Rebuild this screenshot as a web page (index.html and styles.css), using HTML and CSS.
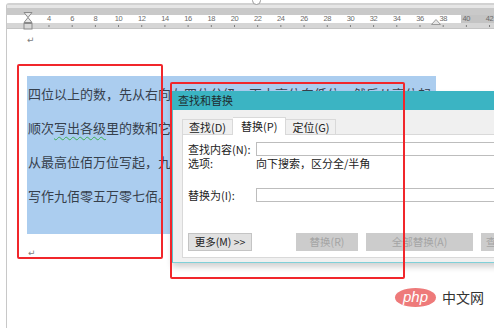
FILE: index.html
```html
<!DOCTYPE html>
<html lang="zh-CN">
<head>
    <meta charset="UTF-8">
    <meta name="viewport" content="width=device-width, initial-scale=1.0">
    <title>查找和替换</title>
    <link rel="stylesheet" href="styles.css">
</head>
<body>
    <div class="app">
        <div class="handle"></div>
        <div class="frame">
            <div class="strip"></div>
            <div class="ruler">
                <div class="ruler-dark"></div>
                <div class="ruler-scale">
                    <span class="ruler-lead"></span>
                    <span>4</span><span>6</span><span>8</span><span>10</span><span>12</span>
                    <span>14</span><span>16</span><span>18</span><span>20</span><span>22</span>
                    <span>24</span><span>26</span><span>28</span><span>30</span><span>32</span>
                    <span>34</span><span>36</span><span>38</span><span>40</span><span>42</span>
                </div>
                <div class="ruler-ticks"></div>
                <!-- indent markers -->
                <svg class="marker-left" width="10" height="18" viewBox="0 0 10 18">
                    <path d="M1 0.5 H9 L5 5.5 Z" fill="#e6e6e6" stroke="#8a8a8a"/>
                    <path d="M5 5.5 L9 10.5 H1 Z" fill="#e6e6e6" stroke="#8a8a8a"/>
                    <rect x="1" y="11.5" width="8" height="5.5" fill="#d8d8d8" stroke="#8a8a8a"/>
                </svg>
                <svg class="marker-right" width="10" height="6" viewBox="0 0 10 6">
                    <path d="M0.5 5.5 L5 0.5 L9.5 5.5 Z" fill="#e6e6e6" stroke="#9a9a9a"/>
                </svg>
            </div>
            <div class="doc">
                <div class="pmark">↵</div>
                <div class="selection">
                    <p>四位以上的数，先从右向左四位分级，再由高位向低位，然后从高位起</p>
                    <p>顺次<span class="wavy">写出各级</span>里的数和它们</p>
                    <p>从最高位佰万位写起，九佰</p>
                    <p>写作九佰零五万零七佰。</p>
                </div>
                <div class="pmark pmark-low">↵</div>
            </div>
        </div>

        <div class="dialog">
            <div class="dlg-title">查找和替换</div>
            <div class="dlg-body">
                <div class="tabs">
                    <div class="tab">查找(<u>D</u>)</div>
                    <div class="tab active">替换(<u>P</u>)</div>
                    <div class="tab">定位(<u>G</u>)</div>
                </div>
                <div class="panel">
                    <div class="row">
                        <label class="lbl">查找内容(<u>N</u>):</label>
                        <div class="field"></div>
                    </div>
                    <div class="row">
                        <span class="lbl">选项:</span>
                        <span>向下搜索，区分全/半角</span>
                    </div>
                    <div class="row row-replace">
                        <label class="lbl">替换为(<u>I</u>):</label>
                        <div class="field"></div>
                    </div>
                    <div class="buttons">
                        <button class="btn btn-more">更多(<u>M</u>) &gt;&gt;</button>
                        <button class="btn btn-off btn-one">替换(<u>R</u>)</button>
                        <button class="btn btn-off btn-all">全部替换(<u>A</u>)</button>
                        <button class="btn btn-off btn-next">查找</button>
                    </div>
                </div>
            </div>
        </div>

        <div class="callout callout-text"></div>
        <div class="callout callout-dialog"></div>

        <div class="watermark">
            <span class="wm-logo">php</span>
            <span class="wm-text">中文网</span>
        </div>
    </div>
</body>
</html>
```

FILE: styles.css
```css
body {
    margin: 0;
    padding: 0;
    background-color: #fff;
    font-family: "Noto Sans CJK SC", "Liberation Sans", sans-serif;
}
.app {
    position: relative;
    width: 494px;
    height: 328px;
    overflow: hidden;
    background-color: #fff;
}
.handle {
    position: absolute;
    left: 252px;
    top: -4px;
    width: 7px;
    height: 7px;
    border: 1px solid #9a9a9a;
    border-radius: 50%;
    background-color: #fff;
    z-index: 2;
}
.frame {
    margin: 3px 0 0 6px;
    height: 325px;
    border-left: 1px solid #c8c8c8;
    border-top: 2px solid #d2d2d2;
    border-top-left-radius: 3px;
}
.strip {
    height: 3px;
    background-color: #e6e6e6;
}
.ruler {
    position: relative;
}
.ruler-dark {
    height: 7px;
    background-color: #c9c9c9;
}
.ruler-scale {
    display: flex;
    height: 8px;
    background: linear-gradient(to right, #fff 454px, #c4c4c4 454px);
    font-family: "Liberation Sans", Arial, sans-serif;
    font-size: 7.5px;
    line-height: 8px;
    color: #6a6a6a;
}
.ruler-lead {
    flex: 0 0 30.4px;
}
.ruler-scale span:not(.ruler-lead) {
    flex: 0 0 23.2px;
    text-align: center;
    letter-spacing: -0.4px;
}
.ruler-ticks {
    height: 5px;
    background-color: #d6d6d6;
    background-image: linear-gradient(to right, #7a7a7a 1px, transparent 1px);
    background-size: 23.2px 2px;
    background-position: 41.5px 2px;
    background-repeat: repeat-x;
    border-bottom: 1px solid #c4c4c4;
}
.marker-left {
    position: absolute;
    left: 16px;
    top: 4px;
}
.marker-right {
    position: absolute;
    left: 424px;
    top: 11px;
}
.doc {
    padding: 5px 0 0 20px;
}
.pmark {
    height: 12px;
    font-family: "DejaVu Sans", sans-serif;
    font-size: 9px;
    line-height: 12px;
    color: #808080;
}
.pmark-low {
    margin-top: 13px;
    padding-left: 1px;
}
.selection {
    margin-top: 30px;
    width: 409px;
    padding: 1px 0 21px;
    background-color: #abcdef;
    overflow: hidden;
}
.selection p {
    margin: 0;
    padding-left: 1px;
    font-size: 13px;
    line-height: 34px;
    color: #36404c;
    white-space: nowrap;
}
.wavy {
    text-decoration: underline wavy #3fae55;
    text-decoration-thickness: 1px;
    text-underline-offset: 3px;
}

/* find & replace dialog */
.dialog {
    position: absolute;
    left: 172px;
    top: 91px;
    width: 340px;
    font-size: 11px;
    color: #222;
    box-shadow: 0 4px 6px rgba(0, 0, 0, 0.18);
}
.dlg-title {
    height: 19px;
    padding-left: 6px;
    line-height: 19px;
    background-color: #3bb4c3;
    color: #1f2d30;
}
.dlg-body {
    padding: 7px 0 4px 9px;
    background-color: #f0f0f0;
    border-left: 1px solid #5cc1cc;
    border-bottom: 1px solid #7fd0d8;
}
.tabs {
    display: flex;
    align-items: flex-end;
    height: 17px;
}
.tab {
    height: 14px;
    padding: 0 6px;
    line-height: 14px;
    border: 1px solid #d9d9d9;
    border-bottom: none;
    background-color: #f0f0f0;
}
.tab + .tab {
    border-left: none;
}
.tab.active {
    height: 17px;
    line-height: 17px;
    padding: 0 8px;
    background-color: #fff;
    position: relative;
    top: 1px;
}
.tab u, .lbl u, .btn u {
    text-decoration: none;
}
.panel {
    padding: 7px 0 6px 5px;
    background-color: #fff;
    border: 1px solid #d9d9d9;
}
.row {
    display: flex;
    align-items: center;
    height: 14px;
    line-height: 14px;
}
.row-replace {
    margin-top: 18px;
}
.lbl {
    flex: 0 0 68px;
}
.field {
    flex: 1;
    height: 12px;
    border: 1px solid #bdbdbd;
    background-color: #fff;
}
.buttons {
    display: flex;
    gap: 8px;
    margin-top: 31px;
}
.btn {
    flex: none;
    height: 18px;
    padding: 0;
    font-family: "Noto Sans CJK SC", sans-serif;
    font-size: 10.5px;
    line-height: 16px;
    white-space: nowrap;
    border: 1px solid #c4c4c4;
    background-color: #e1e1e1;
    color: #222;
}
.btn-more {
    width: 64px;
    margin-right: 36px;
}
.btn-off {
    border-color: #cccccc;
    background-color: #cccccc;
    color: #a4a4a4;
}
.btn-one {
    width: 62px;
}
.btn-all {
    width: 107px;
}
.btn-next {
    width: 40px;
    text-align: left;
    padding-left: 4px;
}

/* red annotation boxes */
.callout {
    position: absolute;
    box-sizing: border-box;
    border: 2px solid #f1262b;
    border-radius: 2px;
}
.callout-text {
    left: 17px;
    top: 64px;
    width: 146px;
    height: 195px;
}
.callout-dialog {
    left: 170px;
    top: 82px;
    width: 235px;
    height: 197px;
}

.watermark {
    position: absolute;
    left: 395px;
    top: 287px;
    display: flex;
    align-items: center;
    gap: 6px;
}
.wm-logo {
    width: 41px;
    height: 19px;
    border-radius: 50%;
    background-color: #ee7a7a;
    color: #fff;
    font-family: "Liberation Sans", Arial, sans-serif;
    font-style: italic;
    font-size: 15px;
    line-height: 18px;
    text-align: center;
}
.wm-text {
    font-size: 14px;
    color: #333;
}
```
